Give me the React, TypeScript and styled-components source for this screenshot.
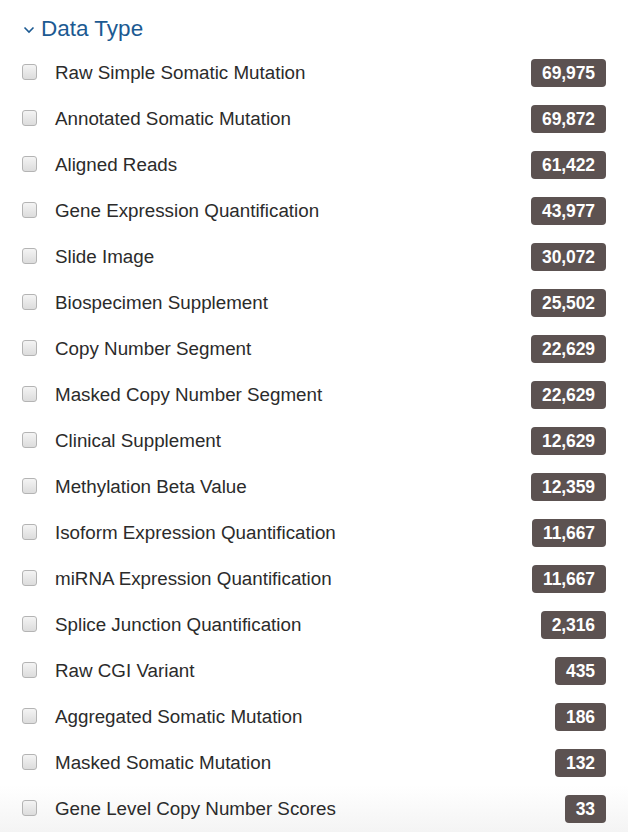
import React from "react";
import styled, { createGlobalStyle } from "styled-components";

const Global = createGlobalStyle`
  html, body { margin: 0; padding: 0; background: #fff; }
  body { font-family: "Liberation Sans", Arial, sans-serif; }
`;

const Page = styled.div`
  width: 628px;
  height: 832px;
  box-sizing: border-box;
  padding: 15px 22px 0 22px;
  background: linear-gradient(to bottom, #fff 0, #fff 785px, #f4f4f4 832px);
  overflow: hidden;
`;

const Header = styled.div`
  display: flex;
  align-items: center;
  gap: 6px;
  height: 28px;
  color: #1c5a92;
  font-size: 22.5px;
  margin-bottom: 16px;
`;

const List = styled.ul`
  list-style: none;
  margin: 0;
  padding: 0;
  display: flex;
  flex-direction: column;
  gap: 18px;
`;

const Row = styled.li`
  display: flex;
  align-items: center;
  height: 28px;
`;

const Check = styled.span`
  flex: none;
  width: 13px;
  height: 14px;
  border: 1px solid #b4b4b4;
  border-radius: 3px;
  background: linear-gradient(to bottom, #f4f4f4, #dcdcdc);
  margin-right: 18px;
  box-sizing: content-box;
  position: relative;
  top: -1px;
`;

const Label = styled.span`
  flex: 1;
  font-size: 18.8px;
  color: #2b2b2b;
`;

const Badge = styled.span`
  flex: none;
  height: 28px;
  line-height: 28px;
  padding: 0 11px;
  border-radius: 4px;
  background: #5c5251;
  color: #fff;
  font-weight: bold;
  font-size: 17.5px;
  letter-spacing: -0.1px;
`;

const items: [string, string][] = [
  ["Raw Simple Somatic Mutation", "69,975"],
  ["Annotated Somatic Mutation", "69,872"],
  ["Aligned Reads", "61,422"],
  ["Gene Expression Quantification", "43,977"],
  ["Slide Image", "30,072"],
  ["Biospecimen Supplement", "25,502"],
  ["Copy Number Segment", "22,629"],
  ["Masked Copy Number Segment", "22,629"],
  ["Clinical Supplement", "12,629"],
  ["Methylation Beta Value", "12,359"],
  ["Isoform Expression Quantification", "11,667"],
  ["miRNA Expression Quantification", "11,667"],
  ["Splice Junction Quantification", "2,316"],
  ["Raw CGI Variant", "435"],
  ["Aggregated Somatic Mutation", "186"],
  ["Masked Somatic Mutation", "132"],
  ["Gene Level Copy Number Scores", "33"],
];

export default function App() {
  return (
    <>
      <Global />
      <Page>
        <Header>
          <svg width="12" height="8" viewBox="0 0 12 8" style={{ marginLeft: 1, marginTop: 2 }}>
            <path d="M1.5 1.5 L6 6 L10.5 1.5" fill="none" stroke="#1c5a92" strokeWidth="1.6" />
          </svg>
          <span>Data Type</span>
        </Header>
        <List>
          {items.map(([label, count]) => (
            <Row key={label}>
              <Check />
              <Label>{label}</Label>
              <Badge>{count}</Badge>
            </Row>
          ))}
        </List>
      </Page>
    </>
  );
}
